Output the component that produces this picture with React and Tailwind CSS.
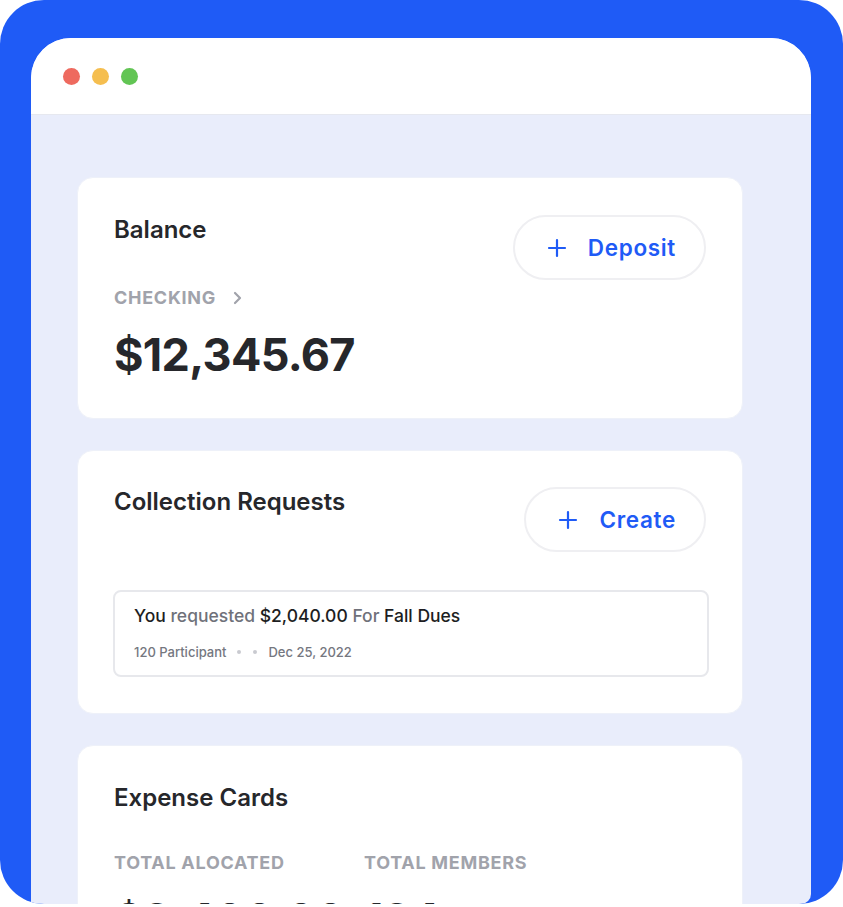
import React from 'react';

// Small plus icon used in the pill buttons
const PlusIcon = () => (
  <svg width="20" height="20" viewBox="0 0 20 20" fill="none" stroke="currentColor" strokeWidth="2.2" strokeLinecap="round">
    <path d="M10 2v16M2 10h16" />
  </svg>
);

const PillButton = ({ label }) => (
  <button className="flex h-[65px] items-center gap-[21px] rounded-full border-2 border-[#efeff2] bg-white pl-[32px] pr-[28px] text-[22.5px] font-semibold tracking-[0.03em] text-[#1f5bf6]">
    <PlusIcon />
    <span>{label}</span>
  </button>
);

const Card = ({ children, className = '' }) => (
  <div className={`shrink-0 rounded-[16px] border border-[#eef1f9] bg-white pl-[36px] pr-[36px] ${className}`}>{children}</div>
);

const Label = ({ children }) => (
  <span className="text-[18px] leading-[24px] font-bold uppercase tracking-[0.04em] text-[#a1a3ab]">{children}</span>
);

const Title = ({ children }) => (
  <h2 className="mt-[1px] text-[24px] leading-[28px] font-semibold text-[#26272b]">{children}</h2>
);

export default function App() {
  return (
    <div className="h-[907px] w-[843px] bg-white" style={{ fontFamily: 'Inter, "Noto Sans", sans-serif' }}>
      <div className="flex h-[904px] w-[843px] flex-col overflow-hidden rounded-[44px] bg-[#1f5bf6] pl-[31px] pr-[32px] pt-[38px]">
        <div className="flex min-h-0 flex-1 flex-col overflow-hidden rounded-t-[40px] rounded-br-[10px] bg-[#e9edfb]">
          {/* window bar */}
          <div className="flex h-[77px] shrink-0 items-center gap-[12px] border-b border-[#e6e8ef] bg-white pl-[32px]">
            <span className="h-[17px] w-[17px] rounded-full bg-[#ee6a5f]" />
            <span className="h-[17px] w-[17px] rounded-full bg-[#f5be4f]" />
            <span className="h-[17px] w-[17px] rounded-full bg-[#62c554]" />
          </div>

          <div className="flex shrink-0 flex-col gap-[31px] pl-[46px] pt-[62px]">
            {/* Balance */}
            <Card className="w-[666px] pb-[37px] pt-[37px]">
              <div className="flex items-start justify-between">
                <div className="flex flex-col">
                  <Title>Balance</Title>
                  <div className="mt-[42px] flex items-center gap-[16px]">
                    <Label>Checking</Label>
                    <svg width="12" height="14" viewBox="0 0 12 14" fill="none" stroke="#a1a3ab" strokeWidth="2.2" strokeLinecap="round" strokeLinejoin="round">
                      <path d="M3 2l5 5-5 5" />
                    </svg>
                  </div>
                  <div className="mt-[19px] text-[45px] leading-[52px] font-bold tracking-[-0.015em] text-[#26272b]">$12,345.67</div>
                </div>
                <PillButton label="Deposit" />
              </div>
            </Card>

            {/* Collection Requests */}
            <Card className="w-[666px] pb-[36px] pt-[36px]">
              <div className="flex items-start justify-between">
                <Title>Collection Requests</Title>
                <PillButton label="Create" />
              </div>
              <div className="-ml-[1px] -mr-[3px] mt-[38px] rounded-[8px] border-2 border-[#e7e8ec] px-[19px] pb-[13px] pt-[12px]">
                <p className="text-[17.5px] leading-[24px] font-medium text-[#1d1e22]">
                  You <span className="text-[#6f717a]">requested</span> $2,040.00 <span className="text-[#6f717a]">For</span> Fall Dues
                </p>
                <div className="mt-[14px] flex items-center text-[13px] leading-[20px] font-medium text-[#75777f]">
                  <span>120 Participant</span>
                  <span className="ml-[11px] h-[4px] w-[4px] rounded-full bg-[#c9cad0]" />
                  <span className="ml-[12px] h-[4px] w-[4px] rounded-full bg-[#c9cad0]" />
                  <span className="ml-[11px]">Dec 25, 2022</span>
                </div>
              </div>
            </Card>

            {/* Expense Cards */}
            <Card className="w-[666px] pb-[37px] pt-[37px]">
              <Title>Expense Cards</Title>
              <div className="mt-[39px] flex">
                <div className="flex w-[250px] flex-col">
                  <Label>Total Alocated</Label>
                  <div className="mt-[19px] text-[45px] leading-[52px] font-bold tracking-[-0.015em] text-[#26272b]">$2,400.00</div>
                </div>
                <div className="flex flex-col">
                  <Label>Total Members</Label>
                  <div className="mt-[19px] text-[45px] leading-[52px] font-bold tracking-[-0.015em] text-[#26272b]">124</div>
                </div>
              </div>
            </Card>
          </div>
        </div>
      </div>
    </div>
  );
}
